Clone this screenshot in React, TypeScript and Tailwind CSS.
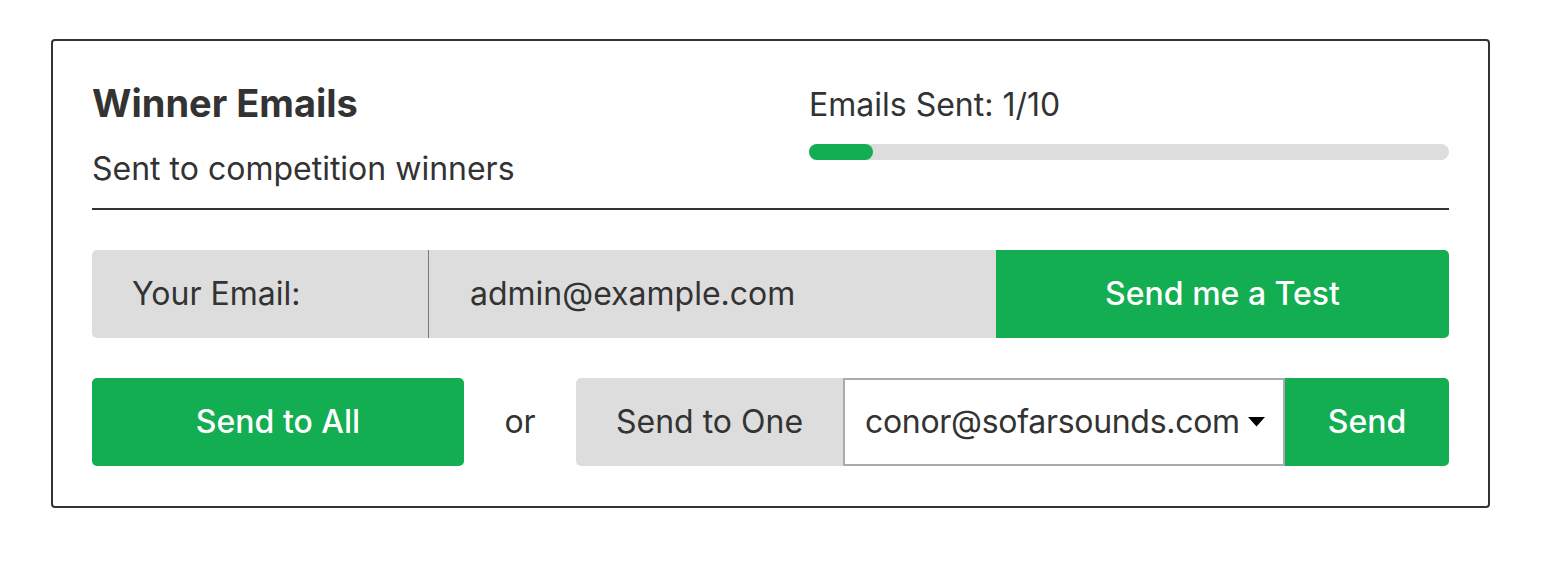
import React from 'react';

export default function App() {
  const sent = 1;
  const total = 10;

  return (
    <div className="min-h-screen bg-white pt-[39px] pl-[51px] font-['Inter',sans-serif] text-[#333333]">
      <div className="w-[1439px] rounded-[4px] border-2 border-[#333333] px-[39px] pt-[39px] pb-[40px]">
        {/* Header */}
        <div className="flex justify-between">
          <div>
            <h1 className="text-[38px] font-bold leading-[46px]">Winner Emails</h1>
            <p className="mt-[23px] text-[32px] leading-[40px]">Sent to competition winners</p>
          </div>
          <div className="w-[640px] pt-[5px]">
            <div className="text-[32px] leading-[40px]">Emails Sent: {sent}/{total}</div>
            <div className="mt-[19px] h-[16px] w-full rounded-full bg-[#dddddd]">
              <div className="h-[16px] rounded-full bg-[#13ad52]" style={{ width: `${(sent / total) * 100}%` }}></div>
            </div>
          </div>
        </div>

        <div className="mt-[19px] h-[2px] bg-[#333333]"></div>

        {/* Test email row */}
        <div className="mt-[40px] flex h-[88px] text-[32px]">
          <div className="flex w-[337px] items-center rounded-l-[5px] border-r border-[#777777] bg-[#dddddd] pl-[40px]">
            Your Email:
          </div>
          <div className="flex w-[567px] items-center bg-[#dddddd] pl-[41px]">admin@example.com</div>
          <button className="flex-1 rounded-r-[5px] bg-[#13ad52] font-medium text-white">Send me a Test</button>
        </div>

        {/* Send row */}
        <div className="mt-[40px] flex h-[88px] items-center text-[32px]">
          <button className="h-full w-[372px] rounded-[5px] bg-[#13ad52] font-medium text-white">Send to All</button>
          <div className="w-[112px] text-center">or</div>
          <div className="flex h-full flex-1">
            <div className="flex w-[267px] items-center justify-center rounded-l-[5px] bg-[#dddddd]">Send to One</div>
            <div className="flex w-[442px] items-center justify-between border-2 border-[#aaaaaa] bg-white pl-[20px] pr-[18px]">
              <span className="tracking-[-0.3px]">conor@sofarsounds.com</span>
              <svg width="17" height="10" viewBox="0 0 17 10">
                <path d="M0 0 L17 0 L8.5 9.5 Z" fill="#000000" />
              </svg>
            </div>
            <button className="flex-1 rounded-r-[5px] bg-[#13ad52] font-medium text-white">Send</button>
          </div>
        </div>
      </div>
    </div>
  );
}
